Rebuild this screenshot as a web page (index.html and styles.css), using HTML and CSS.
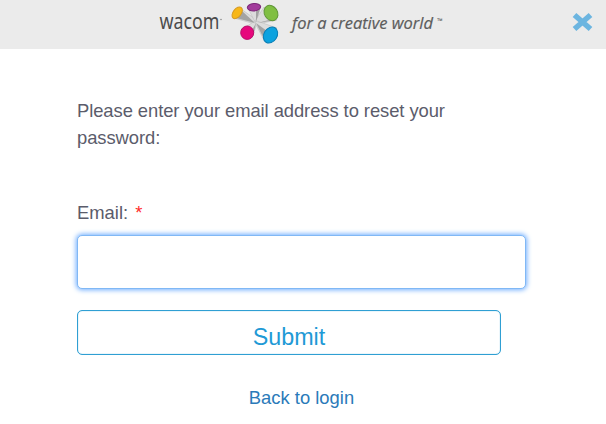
FILE: index.html
```
<!DOCTYPE html>
<html lang="en">
<head>
  <meta charset="utf-8">
  <title>Reset Password</title>
  <link rel="stylesheet" href="styles.css">
</head>
<body>
  <header class="header">
    <svg class="logo" width="300" height="49" viewBox="150 0 300 49" role="img">
      <text class="brand" x="159.500" y="29" textLength="60" lengthAdjust="spacingAndGlyphs">wacom</text>
      <circle class="brand-dot" cx="221" cy="19.500" r=".7"/>
      <g class="cones">
        <path d="M234 18L241 9L258 21L255 24Z"/>
        <path d="M248 8H260L257 22H255Z"/>
        <path d="M264 7L277 20L257 24L255 21Z"/>
        <path d="M241 30L252 38L257 23L255 21Z"/>
        <path d="M264 40L277 28L257 21L255 23Z"/>
      </g>
      <g class="cone-shades">
        <path d="M236 18L255 23L241 10Z"/>
        <path d="M256 10L256 22L260 9Z"/>
        <path d="M269 20L257 23L276 20Z"/>
        <path d="M250 34L256 23L253 36Z"/>
        <path d="M264 39L256 23L267 31Z"/>
      </g>
      <ellipse cx="237.200" cy="12.800" rx="6.700" ry="4" transform="rotate(-52 237.200 12.800)" fill="#f7b718" stroke="#d69a22"/>
      <ellipse cx="254" cy="7.200" rx="6.700" ry="3.700" transform="rotate(-5 254 7.200)" fill="#a23b9b" stroke="#7c2879"/>
      <ellipse cx="271" cy="13" rx="6.500" ry="8.100" transform="rotate(-32 271 13)" fill="#80bf42" stroke="#5f9636"/>
      <ellipse cx="247.200" cy="32.700" rx="6.500" ry="6.700" fill="#e6087d" stroke="#b80b69"/>
      <ellipse cx="270.500" cy="35" rx="6.600" ry="8.500" transform="rotate(32 270.500 35)" fill="#0ba2df" stroke="#087db4"/>
      <text class="tagline" x="292" y="29" textLength="141" lengthAdjust="spacingAndGlyphs">for a creative world</text>
      <text class="trademark" x="436.500" y="22.500" textLength="6" lengthAdjust="spacingAndGlyphs">™</text>
    </svg>
    <button class="close" type="button" aria-label="Close">
      <svg width="24" height="22" viewBox="0 0 24 22">
        <path d="M4.500 4L20.500 18M20.500 4L4.500 18"/>
      </svg>
    </button>
  </header>

  <form class="reset-form">
    <p class="message">Please enter your email address to reset your password:</p>
    <label class="label" for="email">Email: <span class="required">*</span></label>
    <input class="email" type="text" id="email" name="email">
    <button class="submit" type="submit">Submit</button>
    <a class="back" href="#">Back to login</a>
  </form>
</body>
</html>
```

FILE: styles.css
```
body {
  margin: 0;
  background-color: #fff;
  color: #5b5c6b;
  font-family: "Liberation Sans", Arial, sans-serif;
  font-size: 18.4px;
}

.header {
  display: flex;
  justify-content: space-between;
  height: 49px;
  padding: 0 12px 0 150px;
  background-color: #ebebeb;
}

.logo {
  display: block;
}

.brand {
  font-family: "Noto Sans", sans-serif;
  font-size: 21px;
  fill: #4b4b4b;
}

.brand-dot {
  fill: #777;
}

.cones {
  fill: #dcdcdc;
  stroke: #bdbdbd;
  stroke-width: 0.6px;
}

.cone-shades {
  fill: #a3a3a3;
}

.tagline {
  font-family: "Open Sans", sans-serif;
  font-size: 17px;
  font-style: italic;
  fill: #5c5c5c;
  stroke: #5c5c5c;
  stroke-width: 0.2px;
}

.trademark {
  font-family: "Liberation Sans", sans-serif;
  font-size: 6.5px;
  fill: #444;
}

.close {
  height: 22px;
  margin-top: 11px;
  padding: 0;
  border: none;
  background: none;
}

.close svg {
  display: block;
}

.close path {
  fill: none;
  stroke: #6cb5e0;
  stroke-width: 5.5px;
}

.reset-form {
  display: flex;
  flex-direction: column;
  width: 424px;
  padding: 49px 0 0 77px;
}

.message {
  margin: 0;
  line-height: 26.5px;
  letter-spacing: -0.07px;
}

.label {
  margin-top: 50px;
  line-height: 24px;
}

.required {
  margin-left: 2px;
  color: #ff2a2a;
}

.email {
  box-sizing: border-box;
  width: 449px;
  height: 54px;
  margin-top: 10px;
  padding: 0 12px;
  border: 1px solid #80b8f5;
  border-radius: 5px;
  outline: none;
  box-shadow: 0 0 5px 1px #70aeff;
  font: inherit;
}

.submit {
  height: 45px;
  margin-top: 21px;
  padding: 9px 0 0;
  border: 1px solid #2f9fd3;
  border-radius: 5px;
  background-color: #fff;
  box-shadow: inset 0 0 1px #3aa6d8;
  color: #1f9ad6;
  font-family: inherit;
  font-size: 23.3px;
}

.back {
  width: 449px;
  margin-top: 31px;
  color: #2a7ab9;
  line-height: 24px;
  text-align: center;
  text-decoration: none;
}
```
